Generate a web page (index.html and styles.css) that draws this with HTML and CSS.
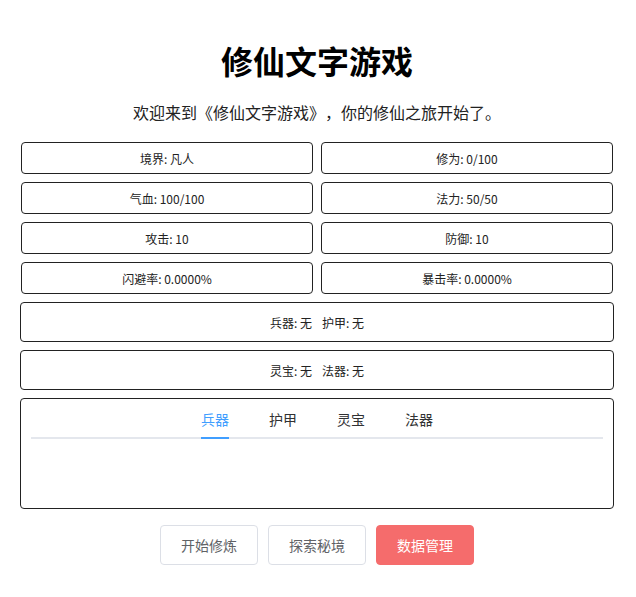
FILE: index.html
```html
<!DOCTYPE html>
<html lang="zh-CN">
<head>
<meta charset="utf-8">
<title>修仙文字游戏</title>
<link rel="stylesheet" href="styles.css">
</head>
<body>
<div class="app">
  <h1 class="title">修仙文字游戏</h1>
  <p class="intro">欢迎来到《修仙文字游戏》，你的修仙之旅开始了。</p>
  <div class="stats">
    <div class="stat">境界: 凡人</div>
    <div class="stat">修为: 0/100</div>
    <div class="stat">气血: 100/100</div>
    <div class="stat">法力: 50/50</div>
    <div class="stat">攻击: 10</div>
    <div class="stat">防御: 10</div>
    <div class="stat">闪避率: 0.0000%</div>
    <div class="stat">暴击率: 0.0000%</div>
  </div>
  <div class="equip"><span>兵器: 无</span><span>护甲: 无</span></div>
  <div class="equip"><span>灵宝: 无</span><span>法器: 无</span></div>
  <div class="tabs-box">
    <div class="tabs-header">
      <div class="tabs-nav">
        <div class="tab active">兵器</div>
        <div class="tab">护甲</div>
        <div class="tab">灵宝</div>
        <div class="tab">法器</div>
      </div>
    </div>
  </div>
  <div class="actions">
    <button class="btn">开始修炼</button>
    <button class="btn">探索秘境</button>
    <button class="btn btn-danger">数据管理</button>
  </div>
</div>
</body>
</html>
```

FILE: styles.css
```css
html, body {
  margin: 0;
  padding: 0;
  background: #fff;
}
body {
  font-family: "Noto Sans CJK SC", "Noto Sans", sans-serif;
  color: #222;
}
.app {
  width: 594px;
  margin-left: 20px;
  padding-top: 40px;
}
.title {
  margin: 0;
  font-size: 32px;
  line-height: 40px;
  font-weight: 700;
  color: #000;
  text-align: center;
}
.intro {
  margin: 20px 0 18px;
  font-size: 16px;
  line-height: 24px;
  text-align: center;
  color: #222;
  text-spacing-trim: space-all;
}
.stats {
  display: grid;
  grid-template-columns: 1fr 1fr;
  gap: 8px;
  padding: 0 1px;
}
.stat {
  height: 30px;
  border: 1px solid #222;
  border-radius: 4px;
  display: flex;
  align-items: center;
  justify-content: center;
  font-size: 12px;
  color: #222;
}
.equip {
  margin-top: 8px;
  height: 38px;
  border: 1px solid #222;
  border-radius: 4px;
  display: flex;
  align-items: center;
  justify-content: center;
  gap: 10px;
  font-size: 12px;
  color: #222;
}
.tabs-box {
  margin-top: 8px;
  height: 109px;
  border: 1px solid #222;
  border-radius: 4px;
  padding: 0 10px;
}
.tabs-header {
  position: relative;
  height: 40px;
  display: flex;
  justify-content: center;
}
.tabs-header::after {
  content: "";
  position: absolute;
  left: 0;
  right: 0;
  bottom: 0;
  height: 2px;
  background: #e4e7ed;
}
.tabs-nav {
  display: flex;
  gap: 40px;
  position: relative;
  z-index: 1;
}
.tab {
  height: 40px;
  line-height: 40px;
  font-size: 14px;
  color: #303133;
  box-sizing: border-box;
}
.tab.active {
  color: #409eff;
  border-bottom: 2px solid #409eff;
}
.actions {
  margin-top: 16px;
  display: flex;
  justify-content: center;
  gap: 10px;
}
.btn {
  font-family: "Noto Sans CJK SC", "Noto Sans", sans-serif;
  height: 40px;
  padding: 0 20px;
  font-size: 14px;
  color: #606266;
  background: #fff;
  border: 1px solid #dcdfe6;
  border-radius: 4px;
}
.btn-danger {
  background: #f56c6c;
  border-color: #f56c6c;
  color: #fff;
}
```
